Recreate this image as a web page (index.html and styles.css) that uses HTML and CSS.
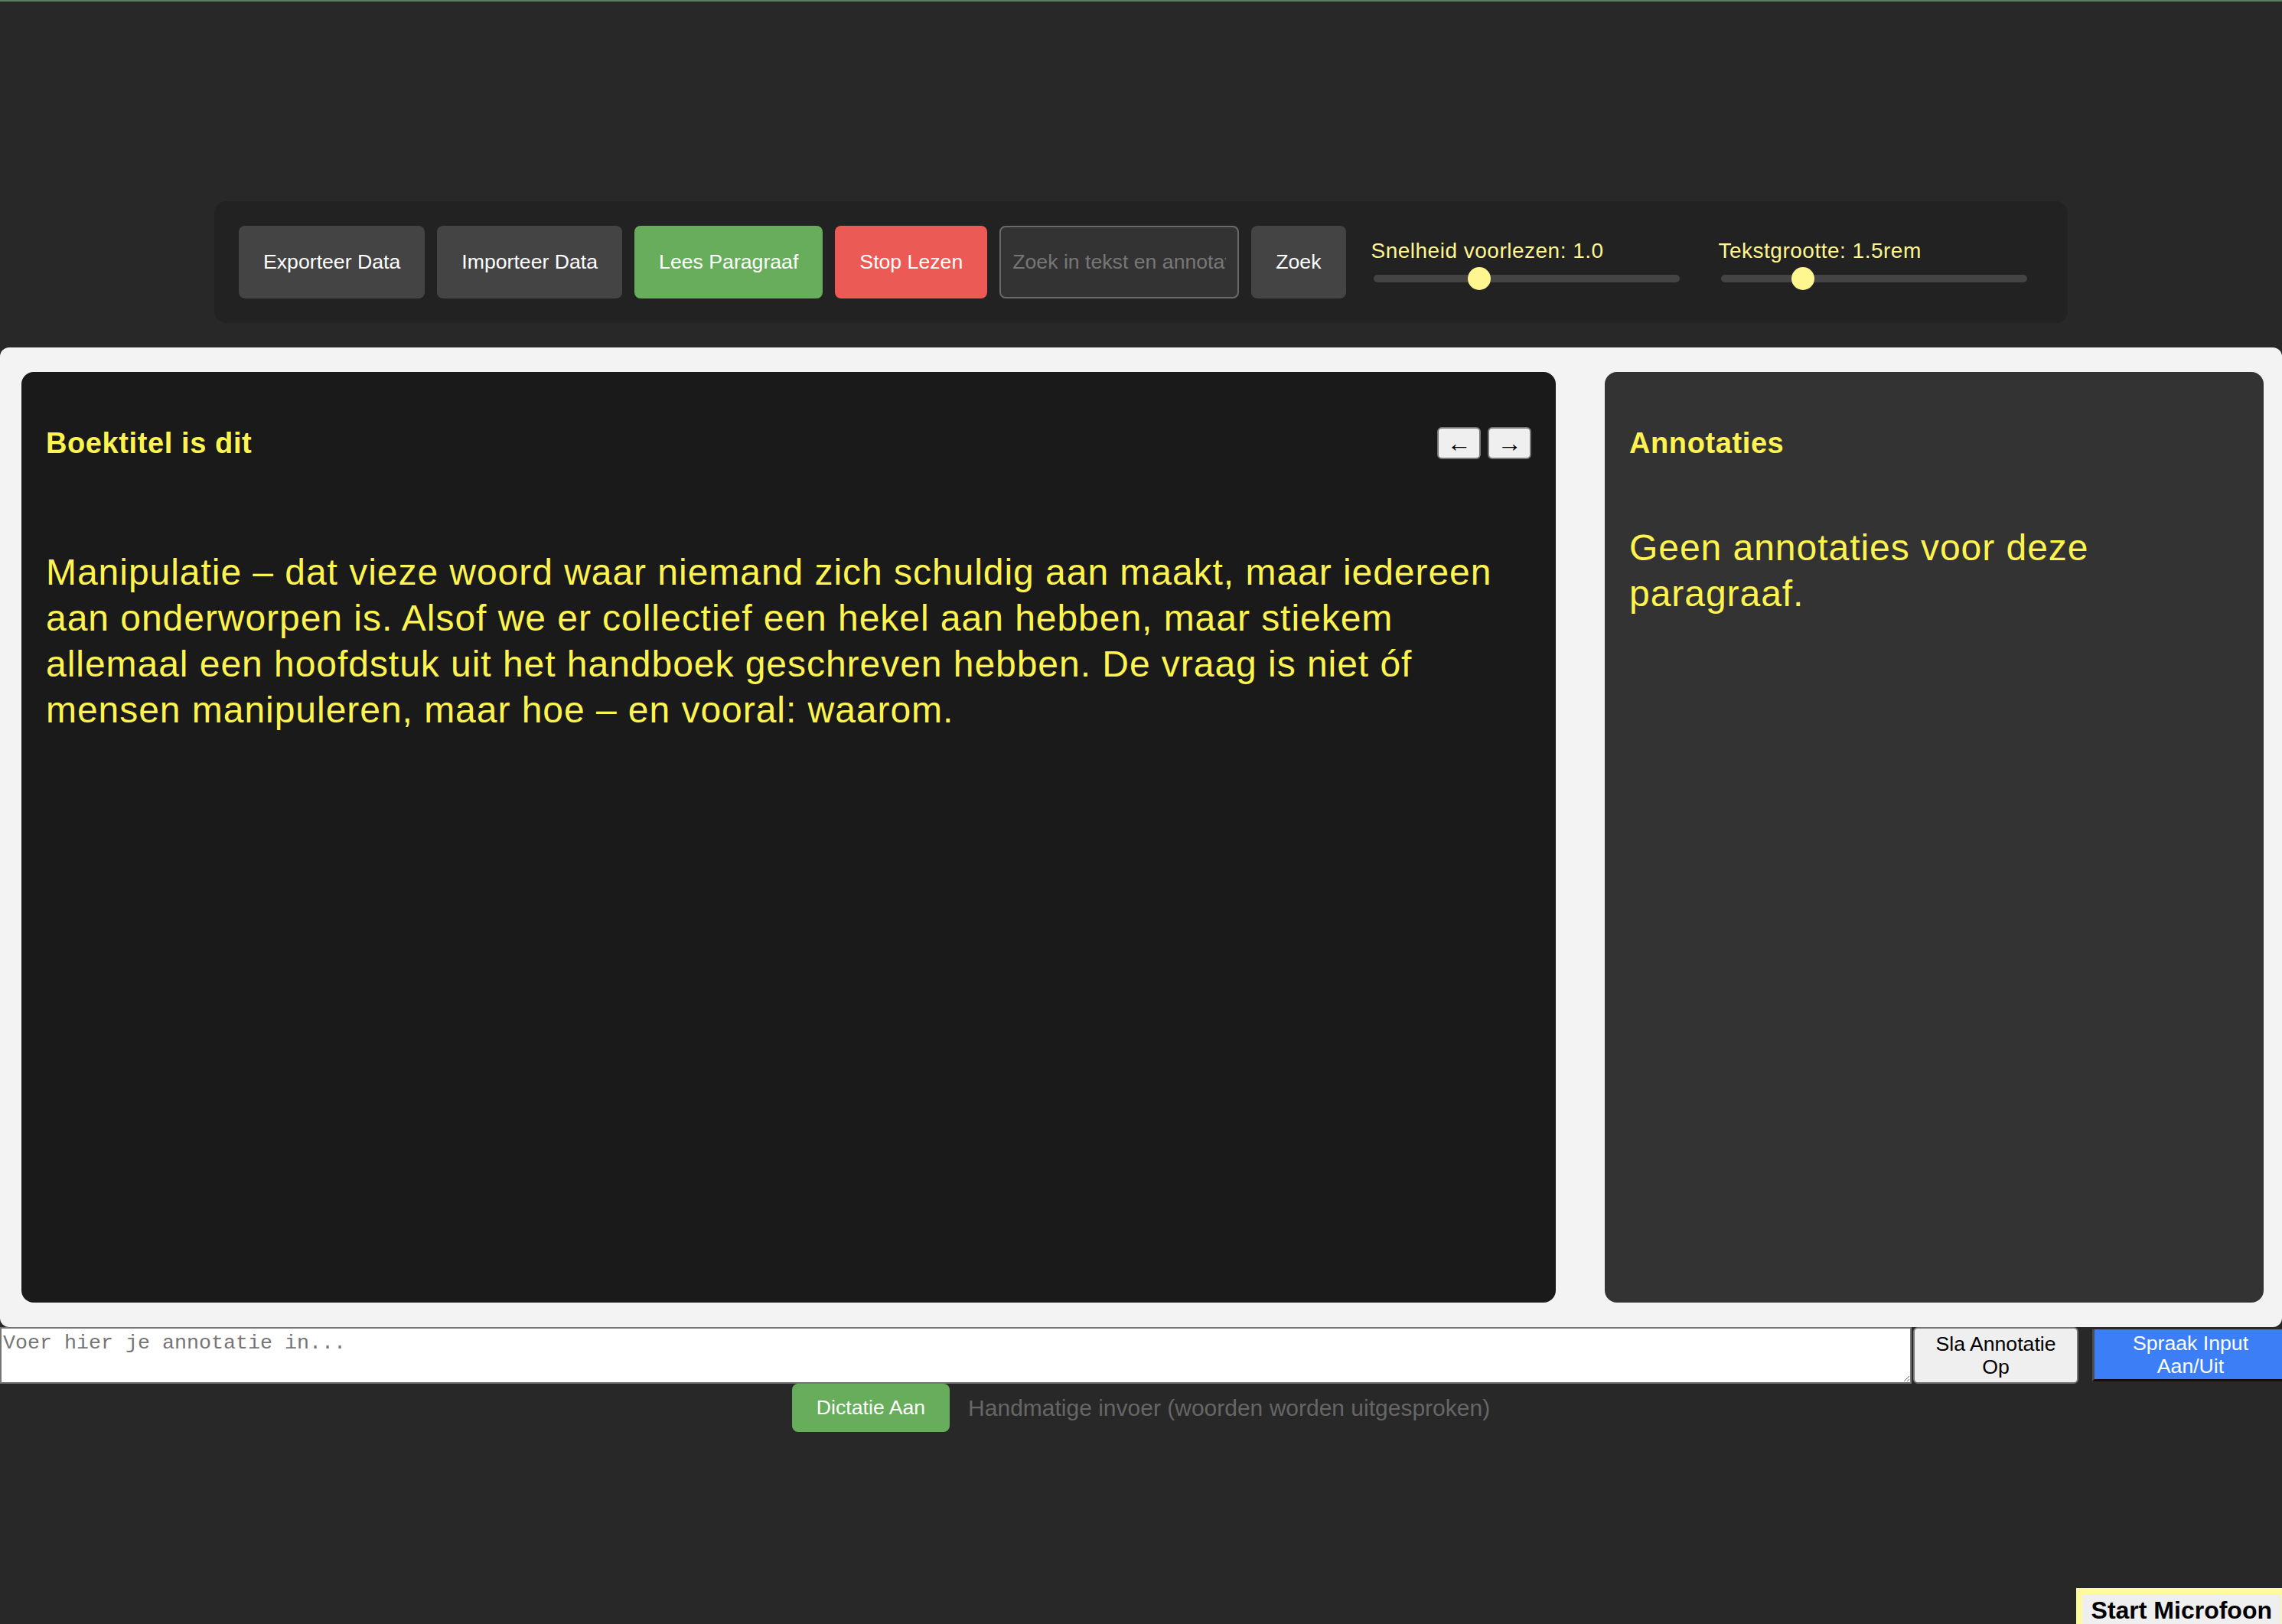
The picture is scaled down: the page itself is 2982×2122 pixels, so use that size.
FILE: index.html
```html
<!DOCTYPE html>
<html lang="nl">
<head>
<meta charset="utf-8">
<title>Lezer</title>
<link rel="stylesheet" href="styles.css">
</head>
<body>
<div class="progress"></div>
<div class="app">
  <div class="controls">
    <button class="btn btn-dark">Exporteer Data</button>
    <button class="btn btn-dark">Importeer Data</button>
    <button class="btn btn-green">Lees Paragraaf</button>
    <button class="btn btn-red">Stop Lezen</button>
    <input class="search" type="text" placeholder="Zoek in tekst en annotaties">
    <button class="btn btn-dark">Zoek</button>
    <div class="slider-group">
      <label class="slider-label">Snelheid voorlezen: 1.0</label>
      <input class="slider" type="range" min="0.5" max="2" step="0.1" value="1.0">
    </div>
    <div class="slider-group">
      <label class="slider-label">Tekstgrootte: 1.5rem</label>
      <input class="slider" type="range" min="1" max="3" step="0.1" value="1.5">
    </div>
  </div>

  <main class="reader">
    <section class="card card-text">
      <div class="card-header">
        <h2 class="card-title">Boektitel is dit</h2>
        <div class="nav">
          <button class="nav-btn">←</button>
          <button class="nav-btn">→</button>
        </div>
      </div>
      <p class="paragraph">Manipulatie – dat vieze woord waar niemand zich schuldig aan maakt, maar iedereen aan onderworpen is. Alsof we er collectief een hekel aan hebben, maar stiekem allemaal een hoofdstuk uit het handboek geschreven hebben. De vraag is niet óf mensen manipuleren, maar hoe – en vooral: waarom.</p>
    </section>
    <aside class="card card-notes">
      <div class="card-header">
        <h2 class="card-title">Annotaties</h2>
      </div>
      <p class="notes-empty">Geen annotaties voor deze paragraaf.</p>
    </aside>
  </main>

  <div class="input-row">
    <textarea class="note-input" placeholder="Voer hier je annotatie in..."></textarea>
    <button class="save-btn">Sla Annotatie Op</button>
    <button class="voice-btn">Spraak Input Aan/Uit</button>
  </div>

  <div class="dictation-row">
    <button class="btn btn-green btn-small">Dictatie Aan</button>
    <span class="dictation-status">Handmatige invoer (woorden worden uitgesproken)</span>
  </div>
</div>
<button class="mic-btn">Start Microfoon</button>
</body>
</html>
```

FILE: styles.css
```css
html, body {
  margin: 0;
  padding: 0;
}
body {
  background: #282828;
  font-family: "Liberation Sans", Arial, sans-serif;
  width: 2982px;
  height: 2122px;
  overflow: hidden;
  position: relative;
}
.progress {
  height: 2px;
  background: #5c7d60;
}
.app {
  display: flex;
  flex-direction: column;
}

/* toolbar */
.controls {
  box-sizing: border-box;
  width: 2422px;
  margin: 261px auto 0;
  padding: 32px;
  background: #222;
  border-radius: 16px;
  display: flex;
  align-items: center;
  gap: 16px;
}
.btn {
  font-family: "Liberation Sans", Arial, sans-serif;
  font-size: 26.67px;
  line-height: normal;
  color: #fff;
  border: none;
  border-radius: 8px;
  padding: 32px;
  white-space: nowrap;
}
.btn-dark { background: #444; }
.btn-green { background: #67ad5b; }
.btn-red { background: #ec5a56; }
.btn-small { padding: 16px 32px; }
.search {
  box-sizing: border-box;
  width: 313px;
  height: 95px;
  padding: 0 15px;
  background: #333;
  border: 2px solid #6a6a6a;
  border-radius: 8px;
  color: #fff;
  font-family: "Liberation Sans", Arial, sans-serif;
  font-size: 26.67px;
}
.search::placeholder { color: #777; }
.slider-group {
  width: 404px;
  margin: 0 17px;
  padding-bottom: 4px;
  display: flex;
  flex-direction: column;
}
.slider-label {
  color: #fff68f;
  font-size: 28px;
  line-height: 32px;
  letter-spacing: 0.5px;
}
.slider {
  -webkit-appearance: none;
  appearance: none;
  width: 400px;
  height: 10px;
  margin: 15px 0 0 3px;
  background: #444;
  border-radius: 5px;
  outline: none;
}
.slider::-webkit-slider-thumb {
  -webkit-appearance: none;
  appearance: none;
  width: 30px;
  height: 30px;
  border-radius: 50%;
  background: #fff68f;
  border: none;
}

/* reader */
.reader {
  box-sizing: border-box;
  margin-top: 32px;
  height: 1280px;
  padding: 32px 24px 32px 28px;
  background: #f3f3f3;
  border-radius: 12px;
  display: flex;
  gap: 64px;
}
.card {
  box-sizing: border-box;
  border-radius: 16px;
  padding: 32px;
  color: #fff44f;
}
.card-text {
  flex: 0 0 2005px;
  background: #1a1a1a;
}
.card-notes {
  flex: 1;
  background: #333;
}
.card-header {
  margin-top: 39px;
  display: flex;
  align-items: center;
  justify-content: space-between;
  min-height: 44px;
}
.card-title {
  margin: 0;
  font-size: 38px;
  font-weight: bold;
  letter-spacing: 0.6px;
  line-height: normal;
}
.nav {
  display: flex;
  gap: 9px;
}
.nav-btn {
  box-sizing: border-box;
  width: 57px;
  height: 42px;
  padding: 0;
  background: #efefef;
  border: 2px solid #767676;
  border-radius: 6px;
  color: #000;
  font-family: "Liberation Sans", Arial, sans-serif;
  font-size: 32px;
  line-height: 1;
}
.paragraph {
  margin: 117px 0 0;
  font-size: 48px;
  line-height: 60px;
  letter-spacing: 0.96px;
}
.notes-empty {
  margin: 85px 0 0;
  font-size: 48px;
  line-height: 60px;
  letter-spacing: 0.96px;
}

/* annotation input */
.input-row {
  display: flex;
  align-items: flex-start;
  width: 2990px;
}
.note-input {
  flex: 1;
  box-sizing: border-box;
  height: 74px;
  margin: 0;
  padding: 4px 2px;
  border: 2px solid #767676;
  background: #fff;
  font-family: "Liberation Mono", "DejaVu Sans Mono", monospace;
  font-size: 26.67px;
  line-height: 30px;
}
.note-input::placeholder { color: #757575; }
.save-btn {
  box-sizing: border-box;
  width: 216px;
  height: 74px;
  margin-left: 2px;
  padding: 2px 12px;
  background: #efefef;
  border: 2px solid #767676;
  border-radius: 6px;
  color: #000;
  font-family: "Liberation Sans", Arial, sans-serif;
  font-size: 26.67px;
  line-height: 30px;
}
.voice-btn {
  box-sizing: border-box;
  width: 256px;
  height: 68px;
  margin: 3px 0 0 18px;
  padding: 2px 12px;
  background: #3b7ef6;
  border-style: solid;
  border-width: 0 2px 3px 3px;
  border-color: #3b7ef6 #111 #111 #4d4d4d;
  color: #fff;
  font-family: "Liberation Sans", Arial, sans-serif;
  font-size: 26.67px;
  line-height: 30px;
}

.dictation-row {
  display: flex;
  align-items: center;
  justify-content: center;
  gap: 24px;
}
.dictation-status {
  color: #666;
  font-size: 30px;
}

.mic-btn {
  position: fixed;
  right: -7px;
  bottom: -12px;
  padding: 3px 12px;
  background: #efefef;
  border: 8px solid #fff9a0;
  color: #000;
  font-family: "Liberation Sans", Arial, sans-serif;
  font-size: 32px;
  font-weight: bold;
  line-height: normal;
}
```
